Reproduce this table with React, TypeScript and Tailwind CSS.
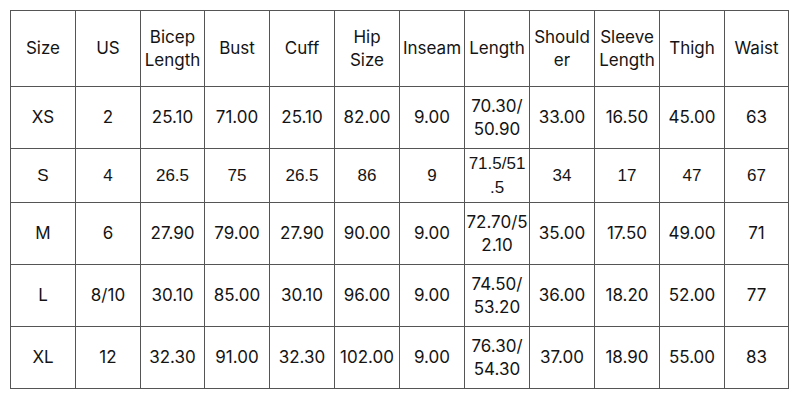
import React from "react";

const headers: React.ReactNode[] = [
  "Size",
  "US",
  <>Bicep<br />Length</>,
  "Bust",
  "Cuff",
  <>Hip<br />Size</>,
  "Inseam",
  "Length",
  <>Should<br />er</>,
  <>Sleeve<br />Length</>,
  "Thigh",
  "Waist",
];

const colClasses = [
  "w-[65px]", "w-[65px]", "w-[64px]", "w-[65px]", "w-[65px]", "w-[65px]",
  "w-[65px]", "w-[65px]", "w-[65px]", "w-[65px]", "w-[65px]", "w-[64px]",
];

type Row = { hClass: string; alt?: boolean; cells: React.ReactNode[] };

const rows: Row[] = [
  { hClass: "h-[62px]", cells: ["XS", "2", "25.10", "71.00", "25.10", "82.00", "9.00", <>70.30/<br />50.90</>, "33.00", "16.50", "45.00", "63"] },
  { hClass: "h-[54px]", alt: true, cells: ["S", "4", "26.5", "75", "26.5", "86", "9", <>71.5/51<br />.5</>, "34", "17", "47", "67"] },
  { hClass: "h-[62px]", cells: ["M", "6", "27.90", "79.00", "27.90", "90.00", "9.00", <>72.70/5<br />2.10</>, "35.00", "17.50", "49.00", "71"] },
  { hClass: "h-[62px]", cells: ["L", "8/10", "30.10", "85.00", "30.10", "96.00", "9.00", <>74.50/<br />53.20</>, "36.00", "18.20", "52.00", "77"] },
  { hClass: "h-[62px]", cells: ["XL", "12", "32.30", "91.00", "32.30", "102.00", "9.00", <>76.30/<br />54.30</>, "37.00", "18.90", "55.00", "83"] },
];

export default function App() {
  return (
    <div className="w-[800px] h-[400px] bg-white pt-[10px] pl-[10px]">
      <table className="w-[778px] table-fixed border-collapse text-[#141414] text-[17px] leading-[23px] [font-family:Inter,sans-serif]">
        <colgroup>
          {colClasses.map((c, i) => (
            <col key={i} className={c} />
          ))}
        </colgroup>
        <thead>
          <tr className="h-[76px]">
            {headers.map((h, i) => (
              <th
                key={i}
                className="border border-[#555555] p-0 font-normal text-center align-middle whitespace-nowrap"
              >
                {h}
              </th>
            ))}
          </tr>
        </thead>
        <tbody>
          {rows.map((r, ri) => (
            <tr key={ri} className={r.hClass}>
              {r.cells.map((c, ci) => (
                <td
                  key={ci}
                  className={
                    r.alt
                      ? "border border-[#555555] p-0 text-center align-middle whitespace-nowrap [font-family:'Liberation_Sans',Arial,sans-serif] leading-[24px]"
                      : "border border-[#555555] p-0 text-center align-middle whitespace-nowrap"
                  }
                >
                  {c}
                </td>
              ))}
            </tr>
          ))}
        </tbody>
      </table>
    </div>
  );
}
